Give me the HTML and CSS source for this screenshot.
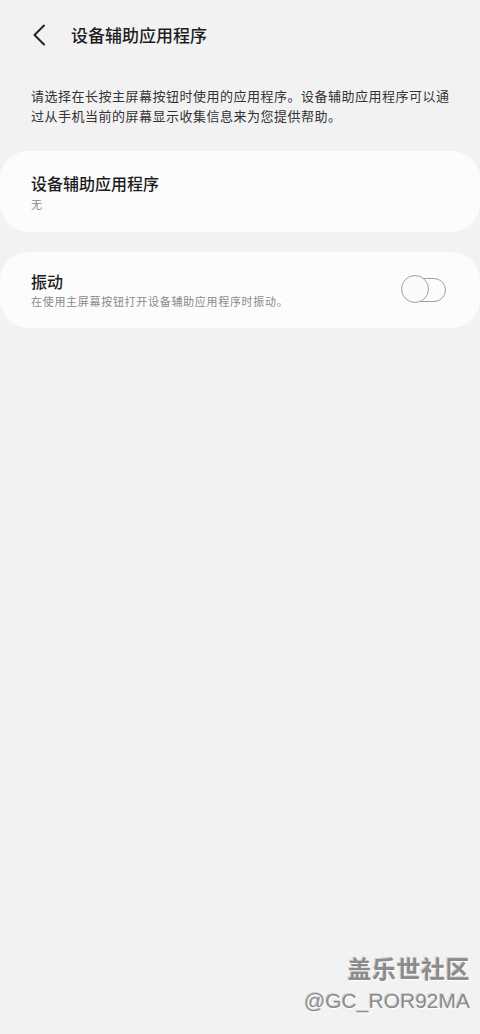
FILE: index.html
```html
<!DOCTYPE html>
<html lang="zh-CN">
<head>
<meta charset="utf-8">
<title>设备辅助应用程序</title>
<link rel="stylesheet" href="styles.css">
</head>
<body>
<div class="page">
  <header class="header">
    <span class="back">
      <svg width="14" height="22" viewBox="0 0 14 22"><path d="M12 1.5 L2.5 11 L12 20.5" fill="none" stroke="#222" stroke-width="2" stroke-linecap="round" stroke-linejoin="round"/></svg>
    </span>
    <h1 class="title">设备辅助应用程序</h1>
  </header>
  <p class="desc">请选择在长按主屏幕按钮时使用的应用程序。设备辅助应用程序可以通过从手机当前的屏幕显示收集信息来为您提供帮助。</p>
  <section class="card card-app">
    <div class="item-title">设备辅助应用程序</div>
    <div class="item-sub">无</div>
  </section>
  <section class="card card-vib">
    <div class="item-text">
      <div class="item-title">振动</div>
      <div class="item-sub">在使用主屏幕按钮打开设备辅助应用程序时振动。</div>
    </div>
    <span class="toggle"><span class="knob"></span></span>
  </section>
  <div class="watermark">
    <div class="wm-cn">盖乐世社区</div>
    <div class="wm-id">@GC_ROR92MA</div>
  </div>
</div>
</body>
</html>
```
FILE: styles.css
```css
html, body {
  margin: 0;
  padding: 0;
  background: #f2f2f2;
}
body {
  font-family: "Noto Sans CJK SC", "Noto Sans", sans-serif;
  color: #222;
}
.page {
  position: relative;
  width: 480px;
  height: 1034px;
  overflow: hidden;
}
.header {
  display: flex;
  align-items: center;
  height: 70px;
  padding-left: 32px;
}
.back {
  display: flex;
  width: 14px;
  height: 22px;
}
.title {
  margin: 0 0 0 25px;
  font-size: 17px;
  font-weight: 500;
  line-height: 24px;
  color: #1e1e1e;
}
.desc {
  margin: 16px 0 0;
  padding: 0 26px 0 31px;
  font-size: 13px;
  letter-spacing: 0.5px;
  line-height: 20px;
  color: #333;
}
.card {
  background: #fcfcfc;
  border-radius: 28px;
}
.card-app {
  margin-top: 25px;
  padding: 21px 31px 20px;
}
.card-vib {
  margin-top: 20px;
  padding: 18px 34px 19px 31px;
  display: flex;
  align-items: center;
  justify-content: space-between;
}
.item-title {
  font-size: 16px;
  font-weight: 500;
  line-height: 22px;
  color: #1c1c1c;
}
.item-sub {
  margin-top: 2px;
  font-size: 11px;
  letter-spacing: 0.7px;
  line-height: 16px;
  color: #8a8a8a;
}
.card-vib .item-sub {
  margin-top: 1px;
}
.toggle {
  position: relative;
  width: 36px;
  height: 22px;
  margin-left: 10px;
  border: 1.5px solid #a0a0a0;
  border-radius: 12px;
  box-sizing: content-box;
  display: block;
}
.knob {
  position: absolute;
  left: -8px;
  top: -3.5px;
  width: 26px;
  height: 26px;
  border: 1.5px solid #a0a0a0;
  border-radius: 50%;
  background: #fafafa;
}
.watermark {
  position: absolute;
  right: 10px;
  top: 950px;
  text-align: right;
  color: #8c8c8c;
  text-shadow: 1px 1px 0 #ffffff, -1px -1px 0 #d0d0d0;
}
.wm-cn {
  font-size: 24px;
  font-weight: 700;
  line-height: 36px;
  letter-spacing: 0.5px;
}
.wm-id {
  font-family: "Liberation Sans", Arial, sans-serif;
  font-size: 21px;
  line-height: 30px;
}
```
